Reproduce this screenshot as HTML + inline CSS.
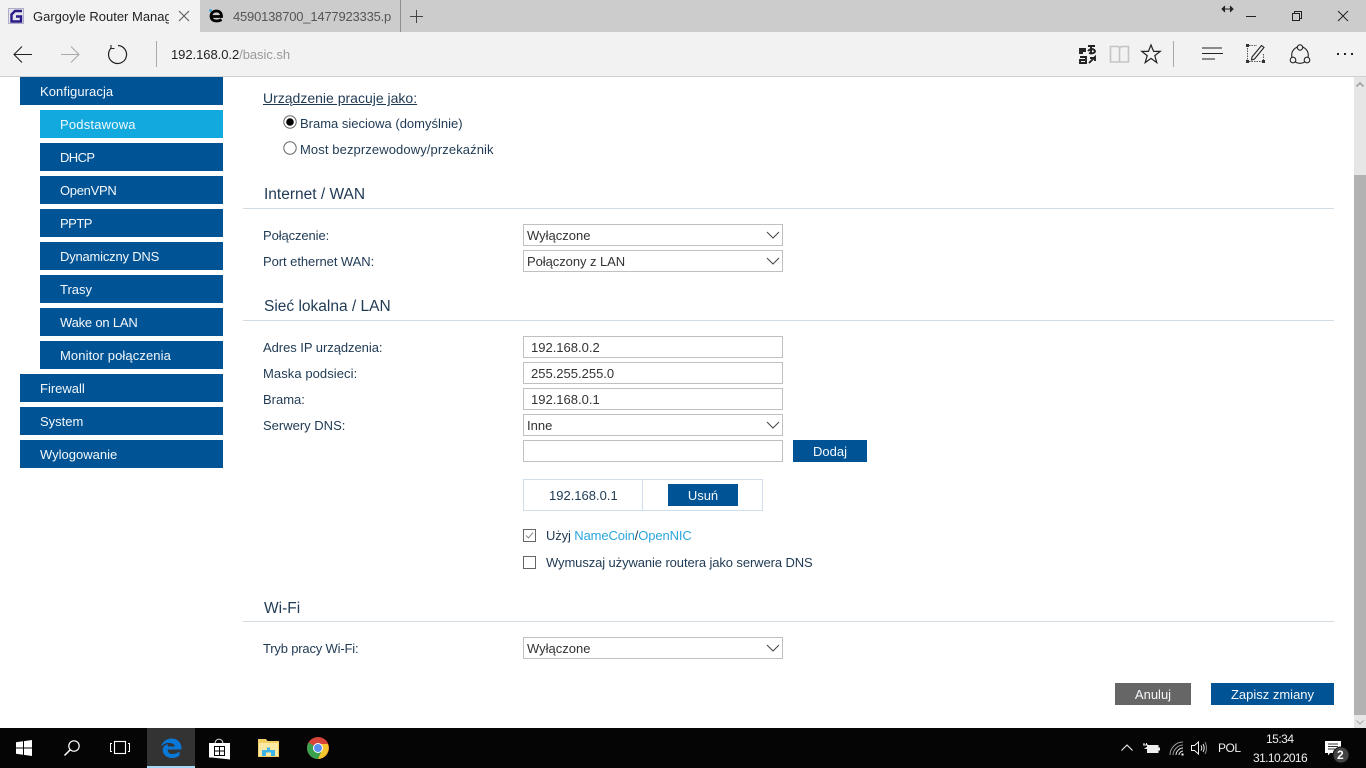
<!DOCTYPE html>
<html lang="pl"><head><meta charset="utf-8"><title>Gargoyle Router Management Utility</title>
<style>
html,body{margin:0;padding:0;width:1366px;height:768px;overflow:hidden;background:#fff}
body{position:relative;font-family:"Liberation Sans",sans-serif;font-size:13px;color:#1f3a54}
.a{position:absolute;white-space:nowrap}
.t{position:absolute;white-space:nowrap;line-height:16px}
.m{position:absolute;height:28px;background:#005395;color:#f4f8fb;line-height:30px;width:183px;padding-left:20px;box-sizing:border-box;left:40px}
.m.top{left:20px;width:203px}
.h{position:absolute;left:264px;font-size:15.5px;line-height:20px;color:#1f3a54}
.hr{position:absolute;left:243px;width:1091px;height:1px;background:#d3dbe3}
.f{position:absolute;left:523px;width:260px;height:22px;box-sizing:border-box;border:1px solid #c0c0c0;padding-left:3px;line-height:22px;background:#fff;color:#333}
.f.i{padding-left:7px}
.f svg{position:absolute;right:2px;top:6px}
.b{position:absolute;background:#005395;color:#f4f8fb;text-align:center;height:22px;line-height:24px}
svg{position:absolute;overflow:visible}
</style></head><body>

<!-- tab strip -->
<div class="a" style="left:0;top:0;width:1366px;height:32px;background:#cccccc"></div>
<div class="a" style="left:0;top:0;width:200px;height:32px;background:#f2f2f2"></div>
<div class="a" style="left:400px;top:0;width:1px;height:32px;background:#8e8e8e"></div>
<svg style="left:8px;top:8px" width="16" height="16" viewBox="0 0 16 16"><rect x="0.5" y="0.5" width="15" height="15" fill="#e4e4ee" stroke="#b0b0c8"/><path d="M14 3H7L3.500 6.500V13.500H13V8.500H8" fill="none" stroke="#2a1a85" stroke-width="2.400"/></svg>
<div class="t" style="left:33px;top:9px;width:136px;overflow:hidden;color:#222;font-size:13px">Gargoyle Router Management Utility</div>
<svg style="left:179px;top:11px" width="10" height="10"><path d="M0 0L10 10M10 0L0 10" stroke="#555" fill="none"/></svg>
<svg style="left:209px;top:9px" width="15" height="14" viewBox="0 0 15 14"><circle cx="1.500" cy="1.500" r="1.500" fill="#4aa8e0"/><path d="M2.500 7.500H12.500C12.500 3.500 10 2 7.500 2C4.500 2 2 4 2 7C2 10.500 4.500 12 7.500 12C9.500 12 11 11.600 12.500 10.600" fill="none" stroke="#000" stroke-width="2.800"/></svg>
<div class="t" style="left:233px;top:9px;width:158px;overflow:hidden;color:#555;letter-spacing:-.2px">4590138700_1477923335.png</div>
<svg style="left:410px;top:10px" width="13" height="13"><path d="M6.500 0V13M0 6.500H13" stroke="#444" fill="none"/></svg>
<svg style="left:1222px;top:6px" width="11" height="6"><path d="M0 3H11M3 0L0 3L3 6M8 0L11 3L8 6" stroke="#222" fill="#222"/></svg>
<svg style="left:1246px;top:16px" width="10" height="1"><path d="M0 .5H10" stroke="#222"/></svg>
<svg style="left:1292px;top:11px" width="10" height="10"><path d="M.5 2.500H7.500V9.500H.5ZM2.500 2.500V.5H9.500V7.500H7.500" fill="none" stroke="#222"/></svg>
<svg style="left:1338px;top:11px" width="10" height="10"><path d="M0 0L10 10M10 0L0 10" stroke="#222" fill="none"/></svg>

<!-- toolbar -->
<div class="a" style="left:0;top:32px;width:1366px;height:44px;background:#f2f2f2"></div>
<div class="a" style="left:0;top:76px;width:1366px;height:1px;background:#cfcfcf"></div>
<svg style="left:13px;top:46px" width="20" height="17"><path d="M19 8.500H1M9 .5L1 8.500L9 16.500" fill="none" stroke="#222" stroke-width="1.100"/></svg>
<svg style="left:60px;top:46px" width="20" height="17"><path d="M1 8.500H19M11 .5L19 8.500L11 16.500" fill="none" stroke="#aaa" stroke-width="1.100"/></svg>
<svg style="left:108px;top:45px" width="20" height="19" viewBox="0 0 20 19"><path d="M10 .5A9 9 0 1 1 3.200 3.100" fill="none" stroke="#222" stroke-width="1.200"/><path d="M3 0V3.500H6.500" fill="none" stroke="#222" stroke-width="1.100"/></svg>
<div class="a" style="left:156px;top:41px;width:1px;height:26px;background:#a8a8a8"></div>
<div class="t" style="left:171px;top:47px;color:#222;font-size:13px;letter-spacing:-.05px">192.168.0.2<span style="color:#9a9a9a">/basic.sh</span></div>
<svg style="left:1080px;top:45px" width="17" height="19" viewBox="0 0 17 19"><path d="M0 4H5V6H2V8H0ZM8 1H15M11 0V8M8 6C11 3 14 4 15 6C15 8 12 9 9 8M0 12H6V18H0V15H5M9 18L15 12V16M10 13H15" fill="none" stroke="#222" stroke-width="1.900"/></svg>
<svg style="left:1110px;top:46px" width="20" height="17"><path d="M.5 .5H8.500L10 2L11.500 .5H18.500V16H.5ZM9.500 2V16" fill="none" stroke="#c4c4c4" stroke-width="1.600"/></svg>
<svg style="left:1141px;top:44px" width="20" height="20" viewBox="0 0 20 20"><path d="M10 1L12.600 7.400H19.200L13.800 11.600L15.800 18.600L10 14.400L4.200 18.600L6.200 11.600L.8 7.400H7.400Z" fill="none" stroke="#222" stroke-width="1.200"/></svg>
<div class="a" style="left:1173px;top:41px;width:1px;height:26px;background:#a8a8a8"></div>
<svg style="left:1202px;top:47px" width="21" height="13"><path d="M0 1H20M0 6.500H21M0 12H13" stroke="#222" fill="none" stroke-width="1.100"/></svg>
<svg style="left:1246px;top:44px" width="19" height="19" viewBox="0 0 19 19"><path d="M3 1.500H11M1.500 4V16M3 17.500H16M17.500 10V16" stroke="#555" stroke-dasharray="1.500 1" fill="none"/><path d="M6 13L15.500 1.500L18 3.500L8.500 15L5.500 16Z" fill="none" stroke="#222" stroke-width="1.100"/><path d="M0 0H3V3H0ZM0 16H3V19H0ZM16 16H19V19H16Z" fill="#333"/></svg>
<svg style="left:1290px;top:44px" width="20" height="20" viewBox="0 0 20 20"><circle cx="10" cy="11" r="8.300" fill="none" stroke="#222" stroke-width="1.100"/><circle cx="10" cy="3.500" r="2.700" fill="#f2f2f2" stroke="#222" stroke-width="1.100"/><circle cx="3" cy="16" r="2.800" fill="#f2f2f2" stroke="#222" stroke-width="1.100"/><circle cx="17" cy="16" r="2.800" fill="#f2f2f2" stroke="#222" stroke-width="1.100"/></svg>
<svg style="left:1337px;top:53px" width="17" height="3"><path d="M0 0H2V2H0ZM7 0H9V2H7ZM14 0H16V2H14Z" fill="#222"/></svg>

<!-- sidebar -->
<div class="m top" style="top:77px;letter-spacing:.08px">Konfiguracja</div>
<div class="m" style="top:110px;background:#12aade;letter-spacing:.2px">Podstawowa</div>
<div class="m" style="top:143px;letter-spacing:-.6px">DHCP</div>
<div class="m" style="top:176px;letter-spacing:-.3px">OpenVPN</div>
<div class="m" style="top:209px;letter-spacing:-.5px">PPTP</div>
<div class="m" style="top:242px;letter-spacing:-.2px">Dynamiczny DNS</div>
<div class="m" style="top:275px">Trasy</div>
<div class="m" style="top:308px;letter-spacing:-.2px">Wake on LAN</div>
<div class="m" style="top:341px;letter-spacing:.1px">Monitor połączenia</div>
<div class="m top" style="top:374px">Firewall</div>
<div class="m top" style="top:407px">System</div>
<div class="m top" style="top:440px">Wylogowanie</div>

<!-- device mode -->
<div class="t" style="left:263px;top:90px;text-decoration:underline;font-size:14px">Urządzenie pracuje jako:</div>
<svg style="left:283px;top:115px" width="14" height="14"><circle cx="7" cy="7" r="6.200" fill="#fff" stroke="#666"/><circle cx="7" cy="7" r="3.800" fill="#000"/></svg>
<div class="t" style="left:300px;top:116px">Brama sieciowa (domyślnie)</div>
<svg style="left:283px;top:141px" width="14" height="14"><circle cx="7" cy="7" r="6.200" fill="#fff" stroke="#666"/></svg>
<div class="t" style="left:300px;top:142px;letter-spacing:.1px">Most bezprzewodowy/przekaźnik</div>

<!-- WAN -->
<div class="h" style="top:185px">Internet / WAN</div>
<div class="hr" style="top:208px"></div>
<div class="t" style="left:263px;top:228px;letter-spacing:-.1px">Połączenie:</div>
<div class="f" style="top:224px">Wyłączone<svg width="14" height="8" viewBox="0 0 14 8"><path d="M1 1L7 7L13 1" fill="none" stroke="#444"/></svg></div>
<div class="t" style="left:263px;top:254px;letter-spacing:-.06px">Port ethernet WAN:</div>
<div class="f" style="top:250px;letter-spacing:-.06px">Połączony z LAN<svg width="14" height="8" viewBox="0 0 14 8"><path d="M1 1L7 7L13 1" fill="none" stroke="#444"/></svg></div>

<!-- LAN -->
<div class="h" style="top:297px">Sieć lokalna / LAN</div>
<div class="hr" style="top:320px"></div>
<div class="t" style="left:263px;top:340px;letter-spacing:-.05px">Adres IP urządzenia:</div>
<div class="f i" style="top:336px">192.168.0.2</div>
<div class="t" style="left:263px;top:366px;letter-spacing:.07px">Maska podsieci:</div>
<div class="f i" style="top:362px">255.255.255.0</div>
<div class="t" style="left:263px;top:392px">Brama:</div>
<div class="f i" style="top:388px">192.168.0.1</div>
<div class="t" style="left:263px;top:418px">Serwery DNS:</div>
<div class="f" style="top:414px">Inne<svg width="14" height="8" viewBox="0 0 14 8"><path d="M1 1L7 7L13 1" fill="none" stroke="#444"/></svg></div>
<div class="f" style="top:440px"></div>
<div class="b" style="left:793px;top:440px;width:74px">Dodaj</div>

<div class="a" style="left:523px;top:479px;width:240px;height:32px;box-sizing:border-box;border:1px solid #cfdeea"></div>
<div class="a" style="left:642px;top:479px;width:1px;height:32px;background:#cfdeea"></div>
<div class="t" style="left:549px;top:488px">192.168.0.1</div>
<div class="b" style="left:668px;top:484px;width:70px">Usuń</div>

<svg style="left:523px;top:529px" width="13" height="13"><rect x=".5" y=".5" width="12" height="12" fill="#fff" stroke="#666"/><path d="M3 6.500L5.500 9L10 3.500" fill="none" stroke="#888"/></svg>
<div class="t" style="left:546px;top:528px;letter-spacing:-.12px">Użyj <span style="color:#2ba6dd">NameCoin</span>/<span style="color:#2ba6dd">OpenNIC</span></div>
<svg style="left:523px;top:556px" width="13" height="13"><rect x=".5" y=".5" width="12" height="12" fill="#fff" stroke="#666"/></svg>
<div class="t" style="left:546px;top:555px;letter-spacing:-.1px">Wymuszaj używanie routera jako serwera DNS</div>

<!-- WiFi -->
<div class="h" style="top:599px">Wi-Fi</div>
<div class="hr" style="top:621px"></div>
<div class="t" style="left:263px;top:641px;letter-spacing:-.18px">Tryb pracy Wi-Fi:</div>
<div class="f" style="top:637px">Wyłączone<svg width="14" height="8" viewBox="0 0 14 8"><path d="M1 1L7 7L13 1" fill="none" stroke="#444"/></svg></div>

<div class="b" style="left:1115px;top:683px;width:76px;background:#666666">Anuluj</div>
<div class="b" style="left:1211px;top:683px;width:123px">Zapisz zmiany</div>

<!-- scrollbar -->
<div class="a" style="left:1354px;top:77px;width:12px;height:651px;background:#e6e6e6"></div>
<div class="a" style="left:1354px;top:175px;width:12px;height:540px;background:#b2b2b2"></div>
<svg style="left:1356px;top:82px" width="8" height="5"><path d="M.5 4.500L4 1L7.500 4.500" fill="none" stroke="#999" stroke-width="1.500"/></svg>
<svg style="left:1356px;top:720px" width="8" height="5"><path d="M.5 .5L4 4L7.500 .5" fill="none" stroke="#aaa"/></svg>

<!-- taskbar -->
<div class="a" style="left:0;top:728px;width:1366px;height:40px;background:#050505"></div>
<div class="a" style="left:147px;top:728px;width:48px;height:40px;background:#333333"></div>
<div class="a" style="left:147px;top:766px;width:48px;height:2px;background:#a6d8f5"></div>
<svg style="left:16px;top:740px" width="16" height="16" viewBox="0 0 16 16"><path d="M0 2.300L7 1.300V7.500H0ZM8 1.100L16 0V7.500H8ZM0 8.500H7V14.700L0 13.700ZM8 8.500H16V16L8 14.900Z" fill="#fff"/></svg>
<svg style="left:64px;top:740px" width="16" height="16" viewBox="0 0 16 16"><circle cx="10" cy="6" r="5.200" fill="none" stroke="#fff" stroke-width="1.200"/><path d="M6.300 9.700L.5 15.500" stroke="#fff" stroke-width="1.500"/></svg>
<svg style="left:110px;top:741px" width="20" height="14" viewBox="0 0 20 14"><rect x="4.500" y=".5" width="11" height="12" fill="none" stroke="#fff" stroke-width="1.100"/><path d="M2 2.500H.5V10.500H2M18 2.500H19.500V10.500H18" fill="none" stroke="#fff"/></svg>
<svg style="left:161px;top:738px" width="21" height="20" viewBox="0 0 21 20"><path d="M2 11.500H20.500C21 5 16.500 .5 10.500 .5C5.500 .5 1 4 0 9C2 6 6 4.500 9 5C12 5.500 14 7 14 8.500H7C6.500 6.500 7 6 7 6C3.500 7 1.700 9.500 1.700 12C1.700 16.500 5.500 20 11 20C14 20 16.500 19 18.500 17.500V13.500C16.500 15 14 16 11.500 16C8.500 16 6.700 14.500 6.700 11.500Z" fill="#0a78d7"/></svg>
<svg style="left:209px;top:738px" width="21" height="22" viewBox="0 0 21 22"><path d="M6 6C6 -.5 14 -.5 14 6" fill="none" stroke="#ddd" stroke-width="1"/><path d="M0 5H21V21.500L3 19.500H0Z" fill="#fff"/><path d="M5 8H16V18H5Z" fill="#000"/><path d="M6 9H10V12.500H6ZM11 9H15V12.500H11ZM6 13.500H10V17H6ZM11 13.500H15V17H11Z" fill="#fff"/></svg>
<svg style="left:258px;top:739px" width="21" height="18" viewBox="0 0 21 18"><path d="M0 0H8L9.500 2H21V18H0Z" fill="#f3cf63"/><path d="M1 4H20V17H1Z" fill="#fde9a4"/><path d="M4 17V11H9V8.500H12V11H17V17H13V13.500H8V17Z" fill="#3cb4e8"/></svg>
<svg style="left:307px;top:737px" width="22" height="22" viewBox="0 0 22 22"><circle cx="11" cy="11" r="11" fill="#d9443a"/><path d="M11 11L1.500 5.500A11 11 0 0 0 11 22L16.500 13Z" fill="#3aa14e"/><path d="M11 7H21A11 11 0 0 1 11 22L15 13Z" fill="#f6c42f"/><circle cx="11" cy="11" r="5" fill="#fff"/><circle cx="11" cy="11" r="4" fill="#5a8ff0"/></svg>

<svg style="left:1121px;top:744px" width="12" height="7"><path d="M.5 6.500L6 1L11.500 6.500" fill="none" stroke="#eee" stroke-width="1.100"/></svg>
<svg style="left:1143px;top:743px" width="17" height="10" viewBox="0 0 17 10"><path d="M1 0V2M3.500 0V2M0 2H4.500V4L2.500 5.500H4.500" fill="none" stroke="#eee"/><rect x="4.500" y="2.500" width="10.500" height="7" fill="none" stroke="#eee"/><rect x="5" y="3" width="9.500" height="6" fill="#eee"/><rect x="15.500" y="4.500" width="1.500" height="3" fill="#eee"/></svg>
<svg style="left:1169px;top:741px" width="15" height="15" viewBox="0 0 15 15"><path d="M1 14C1 7 7 1 14 1M4 14C4 9 9 4 14 4" fill="none" stroke="#999"/><path d="M7 14C7 10.500 10.500 7 14 7M10 14C10 12 12 10 14 10" fill="none" stroke="#eee"/><rect x="12.500" y="12.500" width="2" height="2" fill="#fff"/></svg>
<svg style="left:1191px;top:741px" width="16" height="14" viewBox="0 0 16 14"><path d="M.5 4.500H3.500L7.500 1V13L3.500 9.500H.5Z" fill="none" stroke="#eee"/><path d="M10 4.500C11 6 11 8 10 9.500M12 3C13.500 5.500 13.500 8.500 12 11" fill="none" stroke="#eee"/><path d="M14 1C16 4.500 16 9.500 14 13" fill="none" stroke="#888"/></svg>
<div class="t" style="left:1218px;top:740px;color:#eee;font-size:12px;letter-spacing:-.5px">POL</div>
<div class="t" style="left:1266px;top:731px;color:#eee;font-size:12px;letter-spacing:-.5px">15:34</div>
<div class="t" style="left:1253px;top:750px;color:#eee;font-size:12px;letter-spacing:-.6px">31.10.2016</div>
<svg style="left:1325px;top:741px" width="24" height="24" viewBox="0 0 24 24"><path d="M0 0H16V12H5L3 14.500V12H0Z" fill="#fff"/><path d="M3 3H13M3 5.500H13M3 8H10" stroke="#333"/><circle cx="16" cy="14" r="8" fill="#444" stroke="#111"/></svg>
<div class="t" style="left:1337px;top:747px;color:#fff;font-size:12px;font-weight:bold">2</div>
</body></html>
